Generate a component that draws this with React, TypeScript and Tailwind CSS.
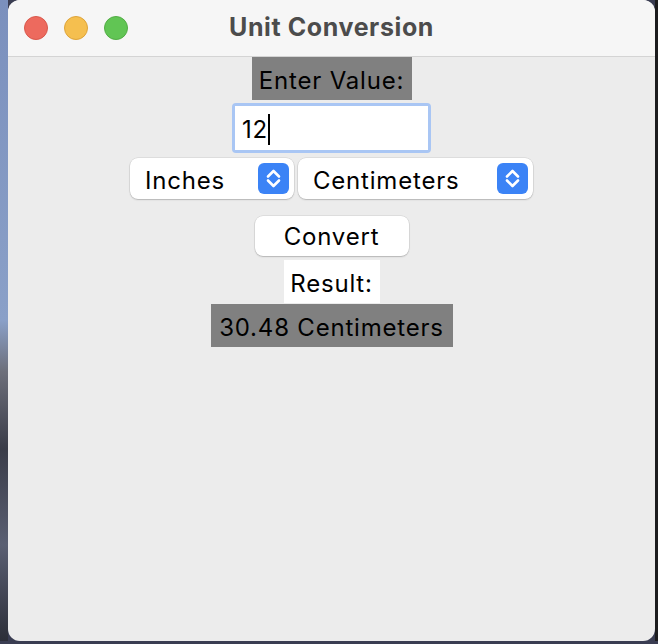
function Stepper() {
  return (
    <span className="flex h-[31px] w-[31px] items-center justify-center rounded-[6px] bg-[#3b83f6]">
      <svg width="31" height="31" viewBox="0 0 31 31" fill="none" stroke="white" strokeWidth="2.6" strokeLinecap="round" strokeLinejoin="round">
        <path d="M10 13.5 L15.5 8 L21 13.5" />
        <path d="M10 17.5 L15.5 23 L21 17.5" />
      </svg>
    </span>
  )
}

function Select({ label, width }: { label: string; width: string }) {
  return (
    <div
      className={`flex h-[41px] items-center justify-between rounded-[8px] bg-white pl-[15px] pr-[5px] shadow-[0_0_0_0.5px_rgba(0,0,0,0.12),0_1px_1.5px_rgba(0,0,0,0.18)] ${width}`}
    >
      <span className="pt-[4px]">{label}</span>
      <Stepper />
    </div>
  )
}

export default function App() {
  return (
    <div className="flex h-[644px] w-[658px] bg-[#3a3d52] font-['Inter','Liberation_Sans',sans-serif]">
      {/* desktop wallpaper peeking out on the left */}
      <div className="h-[641px] w-[8px] bg-[linear-gradient(180deg,#7b90bd_0%,#8aa0c8_50%,#6d6f7a_58%,#3a3c48_70%,#5a5f72_85%,#2c2e38_100%)]" />
      <div className="flex h-[641px] w-[647px] flex-col overflow-hidden rounded-[12px] bg-[#ececec]">
        <div className="relative flex h-[57px] shrink-0 items-center justify-center border-b border-[#d4d4d4] bg-[#f6f6f6]">
          <div className="absolute left-[16px] top-[16px] flex gap-[16px]">
            <span className="h-[24px] w-[24px] rounded-full border border-[#d9584c] bg-[#ed6a5e]" />
            <span className="h-[24px] w-[24px] rounded-full border border-[#dea43a] bg-[#f5bf4f]" />
            <span className="h-[24px] w-[24px] rounded-full border border-[#52ad45] bg-[#61c554]" />
          </div>
          <span className="text-[25px] font-bold tracking-[0.6px] text-[#4c4c4c]">Unit Conversion</span>
        </div>

        <div className="flex flex-col items-center text-[24px] tracking-[0.8px] text-black">
          <div className="flex h-[43px] w-[160px] items-center justify-center bg-[#808080] pt-[5px]">Enter Value:</div>

          <div className="mt-[3px] rounded-[4px] bg-[#a9c6f4] p-[3px]">
            <div className="flex h-[44px] w-[193px] items-center bg-white pl-[7px] pt-[3px]">
              <span>12</span>
              <span className="h-[31px] w-[2px] bg-black" />
            </div>
          </div>

          <div className="mt-[5px] flex gap-[4px]">
            <Select label="Inches" width="w-[164px]" />
            <Select label="Centimeters" width="w-[235px]" />
          </div>

          <button className="mt-[17px] flex h-[40px] w-[154px] items-center justify-center rounded-[8px] bg-white pt-[1px] shadow-[0_0_0_0.5px_rgba(0,0,0,0.12),0_1px_1.5px_rgba(0,0,0,0.18)]">
            Convert
          </button>

          <div className="mt-[4px] flex h-[43px] w-[96px] items-center justify-center bg-white pt-[5px]">Result:</div>
          <div className="mt-[1px] flex h-[43px] w-[242px] items-center justify-center bg-[#808080] pt-[4px]">30.48 Centimeters</div>
        </div>
      </div>
      <div className="h-[641px] w-[3px] bg-[#1c1c1e]" />
    </div>
  )
}
